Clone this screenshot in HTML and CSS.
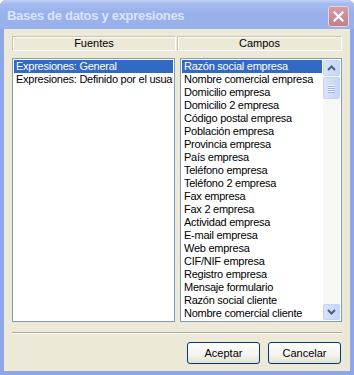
FILE: index.html
```html
<!DOCTYPE html>
<html lang="es">
<head>
    <meta charset="UTF-8">
    <meta name="viewport" content="width=device-width, initial-scale=1.0">
    <title>Bases de datos y expresiones</title>
    <link rel="stylesheet" href="styles.css">
</head>
<body>
    <div class="window">
        <div class="titlebar">
            <span class="title">Bases de datos y expresiones</span>
            <button class="close" aria-label="Cerrar">
                <svg width="11" height="11" viewBox="0 0 11 11">
                    <path d="M1.5 1.5 L9.5 9.5 M9.5 1.5 L1.5 9.5" stroke="#fff" stroke-width="2.2" stroke-linecap="square"/>
                </svg>
            </button>
        </div>

        <div class="client">
            <div class="headers">
                <div class="col-head head-left">Fuentes</div>
                <div class="col-head head-right">Campos</div>
            </div>

            <div class="lists">
                <div class="listbox list-left">
                    <ul class="items">
                        <li class="selected">Expresiones: General</li>
                        <li>Expresiones: Definido por el usuario</li>
                    </ul>
                </div>

                <div class="listbox list-right">
                    <ul class="items">
                        <li class="selected">Razón social empresa</li>
                        <li>Nombre comercial empresa</li>
                        <li>Domicilio empresa</li>
                        <li>Domicilio 2 empresa</li>
                        <li>Código postal empresa</li>
                        <li>Población empresa</li>
                        <li>Provincia empresa</li>
                        <li>País empresa</li>
                        <li>Teléfono empresa</li>
                        <li>Teléfono 2 empresa</li>
                        <li>Fax empresa</li>
                        <li>Fax 2 empresa</li>
                        <li>Actividad empresa</li>
                        <li>E-mail empresa</li>
                        <li>Web empresa</li>
                        <li>CIF/NIF empresa</li>
                        <li>Registro empresa</li>
                        <li>Mensaje formulario</li>
                        <li>Razón social cliente</li>
                        <li>Nombre comercial cliente</li>
                    </ul>
                    <div class="scrollbar">
                        <div class="sb-btn">
                            <svg width="9" height="6" viewBox="0 0 9 6">
                                <path d="M1 5 L4.5 1.5 L8 5" fill="none" stroke="#4d6185" stroke-width="2"/>
                            </svg>
                        </div>
                        <div class="sb-track">
                            <div class="sb-thumb">
                                <span></span><span></span><span></span><span></span>
                            </div>
                        </div>
                        <div class="sb-btn">
                            <svg width="9" height="6" viewBox="0 0 9 6">
                                <path d="M1 1 L4.5 4.5 L8 1" fill="none" stroke="#4d6185" stroke-width="2"/>
                            </svg>
                        </div>
                    </div>
                </div>
            </div>

            <div class="separator"></div>

            <div class="buttons">
                <button class="btn">Aceptar</button>
                <button class="btn">Cancelar</button>
            </div>
        </div>
    </div>
</body>
</html>
```

FILE: styles.css
```css
body {
    margin: 0;
    background-color: #fff;
    font-family: "Liberation Sans", Arial, sans-serif;
    font-size: 11px;
}

.window {
    width: 354px;
    height: 375px;
    box-sizing: border-box;
    background-color: #8fa6e8;
    border-radius: 6px 6px 0 0;
    display: flex;
    flex-direction: column;
}

.titlebar {
    height: 29px;
    flex: none;
    display: flex;
    align-items: center;
    justify-content: space-between;
    padding: 0 5px 0 7px;
    background: linear-gradient(to bottom, #c1d1f4 0px, #a4baee 4px, #98b0ec 14px, #9ab1ec 100%);
    border-radius: 6px 6px 0 0;
}

.title {
    color: #dbe5fa;
    font-weight: bold;
    font-size: 13px;
    letter-spacing: -0.3px;
    padding-top: 1px;
}

.close {
    width: 21px;
    height: 21px;
    padding: 0;
    margin-top: 3px;
    border: 1px solid #e6d4dc;
    border-radius: 3px;
    background: linear-gradient(to bottom, #d49ba4, #c28088);
    display: flex;
    align-items: center;
    justify-content: center;
}

.client {
    flex: 1;
    margin: 0 4px 4px 4px;
    background-color: #ece9d8;
    padding: 7px 8px 0 8px;
    display: flex;
    flex-direction: column;
}

.headers {
    display: flex;
    height: 15px;
    gap: 1px;
}

.col-head {
    box-sizing: border-box;
    border-top: 1px solid #c7c5b2;
    border-left: 1px solid #c7c5b2;
    border-right: 1px solid #fff;
    border-bottom: 1px solid #fff;
    box-shadow: inset 1px 1px 0 #fff;
    text-align: center;
    line-height: 13px;
    color: #000;
}

.head-left {
    width: 164px;
}

.head-right {
    flex: 1;
}

.lists {
    display: flex;
    gap: 5px;
    margin-top: 7px;
    height: 264px;
}

.listbox {
    box-sizing: border-box;
    border: 1px solid #7f9db9;
    background-color: #fff;
    padding: 1px;
    display: flex;
    overflow: hidden;
}

.list-left {
    width: 163px;
}

.list-right {
    flex: 1;
}

.items {
    list-style: none;
    margin: 0;
    padding: 0;
    flex: 1;
    min-width: 0;
    letter-spacing: -0.25px;
}

.items li {
    height: 13px;
    line-height: 13px;
    padding-left: 2px;
    white-space: nowrap;
    overflow: hidden;
    color: #000;
}

.items li.selected {
    background-color: #316ac5;
    color: #fff;
}

.list-right .items {
    margin-right: 1px;
}

.scrollbar {
    width: 17px;
    display: flex;
    flex-direction: column;
    background-color: #f8f8f5;
}

.sb-btn {
    height: 16px;
    box-sizing: border-box;
    border: 1px solid #c3d2f5;
    border-radius: 2px;
    background: linear-gradient(to right, #d9e4fb, #c6d5f7);
    display: flex;
    align-items: center;
    justify-content: center;
}

.sb-track {
    flex: 1;
    padding-top: 1px;
}

.sb-thumb {
    height: 22px;
    box-sizing: border-box;
    border: 1px solid #c3d2f5;
    border-radius: 2px;
    background: linear-gradient(to right, #d9e4fb, #c6d5f7);
    display: flex;
    flex-direction: column;
    align-items: center;
    justify-content: center;
    gap: 1px;
}

.sb-thumb span {
    width: 7px;
    height: 1px;
    background-color: #eef3fd;
    box-shadow: 0 1px 0 #9fb5ea;
}

.separator {
    margin-top: 10px;
    height: 1px;
    background-color: #aca899;
    border-bottom: 1px solid #fff;
}

.buttons {
    display: flex;
    justify-content: flex-end;
    gap: 8px;
    margin-top: 8px;
    padding-right: 1px;
}

.btn {
    width: 73px;
    height: 22px;
    font-family: "Liberation Sans", Arial, sans-serif;
    font-size: 11px;
    color: #000;
    border: 1px solid #003c74;
    border-radius: 3px;
    background: linear-gradient(to bottom, #fff 0%, #f4f3ee 60%, #e3e0d2 100%);
    padding: 0;
}
```
